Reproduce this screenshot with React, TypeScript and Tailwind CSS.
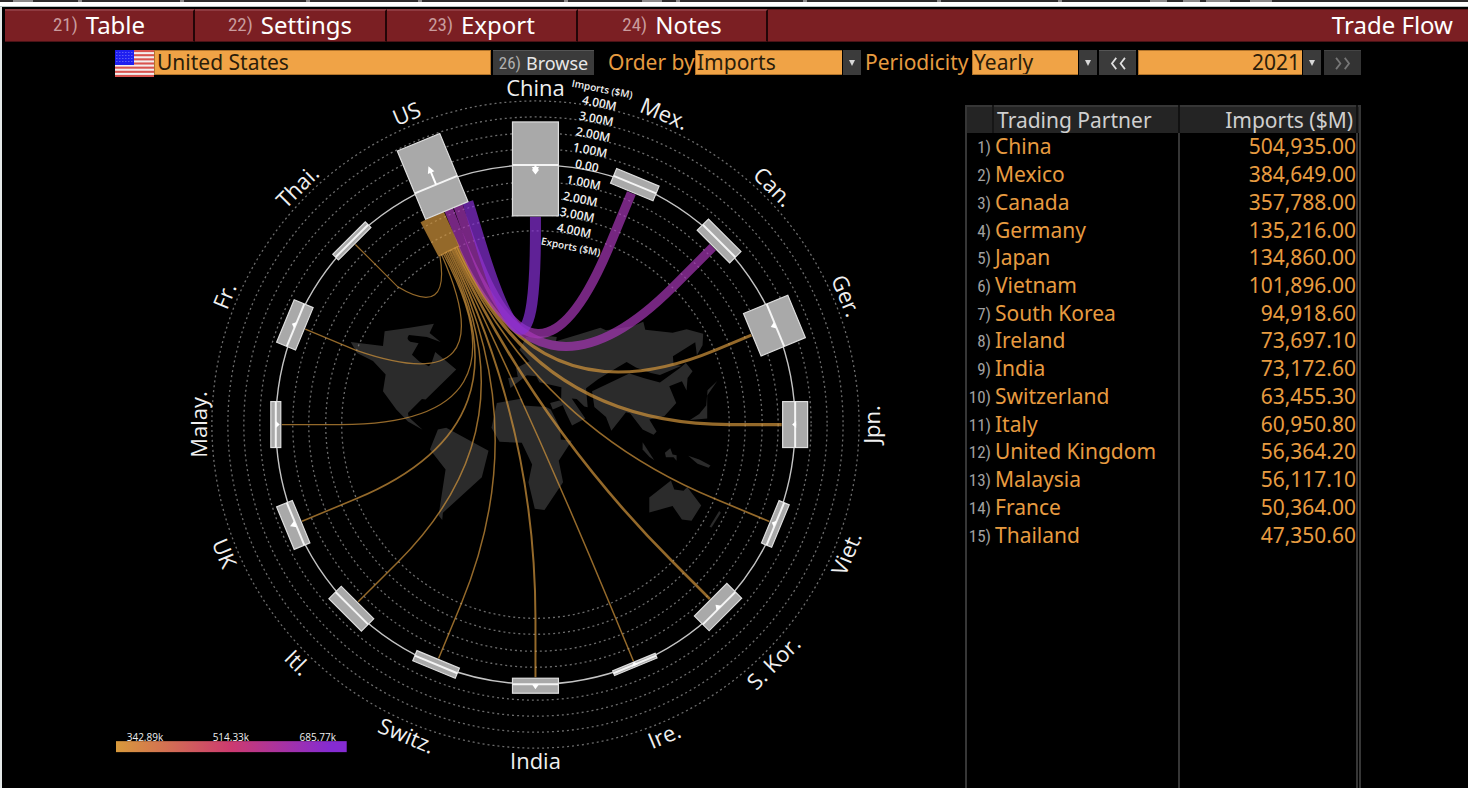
import type { ReactNode } from "react";

type Point = [number, number];

interface Node {
  label: string;
  angle: number;
  outer: number;
  inner: number;
  color?: string;
  width?: number;
  /** Signed length of the net balance arrow, positive pointing outwards. */
  net?: number;
  /** Control point of the flow curve, relative to the centre. */
  bend?: Point;
}

const AMBER = "#d3953c";
const MAGENTA = "#a736b6";
const PURPLE = "#882fd6";

const CX = 536;
const CY = 425;
const ZERO_RADIUS = 260;
const NODE_WIDTH = 46;
const LABEL_RADIUS = 337;
const BEND_RADIUS = 195;
const US_EDGE_RADIUS = 233;
const RINGS = [324, 308, 292, 276, 243, 227, 210, 194];

const nodes: Node[] = [
  { label: "China", angle: 0, outer: 43, inner: 51, color: PURPLE, width: 11, net: -9 },
  { label: "Mex.", angle: 22.5, outer: 8, inner: 8, color: MAGENTA, width: 9.5 },
  { label: "Can.", angle: 45, outer: 8, inner: 8, color: MAGENTA, width: 9 },
  { label: "Ger.", angle: 67.5, outer: 23, inner: 25, color: AMBER, width: 3, net: -5 },
  { label: "Jpn.", angle: 90, outer: 12.5, inner: 12.5, color: AMBER, width: 3.2, net: -3 },
  { label: "Viet.", angle: 112.5, outer: 5.5, inner: 5.5, color: AMBER, width: 1.7, net: -4 },
  { label: "S. Kor.", angle: 135, outer: 9, inner: 12, color: AMBER, width: 2.6, net: -5 },
  { label: "Ire.", angle: 157.5, outer: 2.5, inner: 2.5, color: AMBER, width: 1.5, net: -3 },
  { label: "India", angle: 180, outer: 9, inner: 6, color: AMBER, width: 2, net: 5 },
  { label: "Switz.", angle: 202.5, outer: 5.5, inner: 5.5, color: AMBER, width: 1.5 },
  { label: "Itl.", angle: 225, outer: 9.5, inner: 8, color: AMBER, width: 1.5 },
  { label: "UK", angle: 247.5, outer: 11, inner: 6, color: AMBER, width: 1.6, net: 6 },
  { label: "Malay.", angle: 270, outer: 5, inner: 5, color: AMBER, width: 1.3, net: -4 },
  { label: "Fr.", angle: 292.5, outer: 11, inner: 9.5, color: AMBER, width: 1.3, net: 4, bend: [-28, -22] },
  { label: "Thai.", angle: 315, outer: 4, inner: 4, color: AMBER, width: 1.2, bend: [-85, -106] },
  { label: "US", angle: 337.5, outer: 46, inner: 28, net: 20 },
];

/** Angle at which each flow meets the US block. */
const usAngles: Record<string, number> = { China: 343.1, "Mex.": 340.5, "Can.": 338 };
nodes
  .filter((n) => n.color === AMBER)
  .forEach((n, i) => {
    usAngles[n.label] = 336.4 - i * 0.53;
  });

const polar = (angle: number, r: number): Point => {
  const a = (angle * Math.PI) / 180;
  return [r * Math.sin(a), -r * Math.cos(a)];
};

const partners: [string, string][] = [
  ["China", "504,935.00"],
  ["Mexico", "384,649.00"],
  ["Canada", "357,788.00"],
  ["Germany", "135,216.00"],
  ["Japan", "134,860.00"],
  ["Vietnam", "101,896.00"],
  ["South Korea", "94,918.60"],
  ["Ireland", "73,697.10"],
  ["India", "73,172.60"],
  ["Switzerland", "63,455.30"],
  ["Italy", "60,950.80"],
  ["United Kingdom", "56,364.20"],
  ["Malaysia", "56,117.10"],
  ["France", "50,364.00"],
  ["Thailand", "47,350.60"],
];

const tabs = [
  { n: 21, label: "Table", width: "w-[190px]" },
  { n: 22, label: "Settings", width: "w-[192px]" },
  { n: 23, label: "Export", width: "w-[191px]" },
  { n: 24, label: "Notes", width: "w-[190px]" },
];

function Num({ children, className = "" }: { children: ReactNode; className?: string }) {
  return (
    <span className={`font-['Roboto_Condensed','Open_Sans',sans-serif] ${className}`}>{children}</span>
  );
}

function Flow({ node }: { node: Node }) {
  if (!node.color) return null;
  const end = usAngles[node.label];
  const [ax, ay] = polar(node.angle, ZERO_RADIUS - node.inner - 1);
  const [bx, by] = polar(node.angle, BEND_RADIUS);
  const [cx, cy] = node.bend ?? [0, 0];
  const [dx, dy] = polar(end, BEND_RADIUS);
  const [ex, ey] = polar(end, US_EDGE_RADIUS);
  const tail = node.color === AMBER ? "" : `L${ex} ${ey}`;
  return (
    <path
      d={`M${ax} ${ay}L${bx} ${by}Q${cx} ${cy} ${dx} ${dy}${tail}`}
      fill="none"
      stroke={node.color}
      strokeWidth={node.width}
      strokeOpacity={0.7}
    />
  );
}

/** Solid band in which the amber flows leave the US block side by side. */
function AmberBand() {
  const corners = [
    polar(336.7, US_EDGE_RADIUS),
    polar(330.4, US_EDGE_RADIUS),
    polar(330, BEND_RADIUS - 1),
    polar(336.9, BEND_RADIUS - 1),
  ];
  return <polygon points={corners.map((c) => c.join(",")).join(" ")} fill={AMBER} fillOpacity={0.7} />;
}

function Block({ node }: { node: Node }) {
  const net = node.net ?? 0;
  const dir = net > 0 ? -1 : 1;
  const tip = Math.abs(net) * dir;
  const head = Math.abs(net) > 8 ? 7 : Math.max(4, Math.abs(net));
  return (
    <g transform={`rotate(${node.angle}) translate(0 ${-ZERO_RADIUS})`}>
      <rect
        x={-NODE_WIDTH / 2}
        y={-node.outer}
        width={NODE_WIDTH}
        height={node.outer + node.inner}
        fill="#a9a9a9"
        stroke="#dedede"
        strokeWidth={1.2}
      />
      <line x1={-NODE_WIDTH / 2} x2={NODE_WIDTH / 2} y1={0} y2={0} stroke="#f4f4f4" strokeWidth={2} />
      {net !== 0 && (
        <g fill="#fff" stroke="none">
          <path d={`M0 ${tip}L-3.5 ${tip - head * dir}H3.5Z`} />
          <rect x={-1} y={Math.min(0, tip - 4 * dir)} width={2} height={Math.abs(tip - 4 * dir)} />
          {node.label === "China" && <path d="M-3.5 5L0 9.5L3.5 5L0 1Z" />}
        </g>
      )}
    </g>
  );
}

const SCALE_LABELS: [string, number][] = [
  ["4.00M", 328],
  ["3.00M", 312],
  ["2.00M", 296],
  ["1.00M", 280],
  ["0.00", 264],
  ["1.00M", 247],
  ["2.00M", 230],
  ["3.00M", 214],
  ["4.00M", 198],
];

function WorldMap() {
  return (
    <g transform="translate(340 300) scale(0.3333)" fill="#2b2b2b">
      <path d="M33 127L130 139L135 95L210 84L283 72L270 100L303 127L262 112L208 106Q198 118 212 126L237 131L217 165L240 186L268 200L276 190L287 157L350 210L258 300L247 298L205 340L207 352L249 391L205 366L170 330L130 275L138 225L100 184L52 160Z" />
      <path d="M295 390L320 385L447 454L427 533L310 640L308 662L297 648L318 510L271 450Z" />
      <path d="M472 310L548 297L550 318L620 322L634 330L662 385L664 420L697 424L658 484L671 548L615 632L586 628L567 548L578 495L547 430L480 427L456 385Z" />
      <path d="M506 235L535 232L530 206L570 185L540 150L560 112L620 108L652 112L650 125L720 104L783 84L800 92L880 80L912 66L918 90L1000 99L1042 89L1092 102L1090 137L1073 167L1068 128L1001 170L1003 196L1027 198L962 226L935 220L890 204L862 187L835 203L775 240L740 266L745 323L735 321L712 298L697 297L738 357L698 378L680 340L665 305L666 263L600 248L590 230L562 227L513 265Z" />
      <path d="M632 310L660 303L675 315L640 330Z" />
      <path d="M758 275L870 222L915 236L962 249L1022 205L1040 190L1060 215L1045 235L1042 273L1028 245L990 260L1011 310L975 350L930 360L952 396L943 406L910 390L873 342L860 338L816 394L800 352L765 322Z" />
      <path d="M1134 244L1104 288L1104 357L1052 361L1080 343L1101 318L1105 272Z" />
      <path d="M910 428L945 482L930 472L910 450Z" />
      <path d="M977 460L993 446L1000 465L1012 467L1012 484L1003 473L980 473Z" />
      <path d="M1047 469L1080 480L1114 498L1108 505L1075 493Z" />
      <path d="M930 594L995 543L1005 570L1033 574L1044 563L1086 618L1057 664L1028 660L1000 620L930 639Z" />
      <path d="M1140 635L1145 640L1117 684L1111 682Z" />
    </g>
  );
}

function FlowChart() {
  return (
    <svg
      viewBox="115 77 785 711"
      className="block w-full overflow-visible font-['Open_Sans',sans-serif]"
      role="img"
      aria-label="United States imports by trading partner, 2021"
    >
      <defs>
        <linearGradient id="flowScale">
          <stop offset="0" stopColor="#d89a3c" />
          <stop offset="0.5" stopColor="#cc3a70" />
          <stop offset="0.93" stopColor="#852bd2" />
        </linearGradient>
      </defs>
      <WorldMap />
      <g transform={`translate(${CX} ${CY})`}>
        {RINGS.map((r) => (
          <circle key={r} r={r} fill="none" stroke="#6c6c6c" strokeWidth={1.3} strokeDasharray="2 3" />
        ))}
        <circle r={ZERO_RADIUS} fill="none" stroke="#c4c4c4" strokeWidth={1.4} />
        {[...nodes].reverse().map((n) => (
          <Flow key={n.label} node={n} />
        ))}
        <AmberBand />
        {nodes.map((n) => (
          <Block key={n.label} node={n} />
        ))}
        {nodes.map((n) => {
          const [x, y] = polar(n.angle, LABEL_RADIUS);
          const flip = n.angle >= 90 && n.angle < 270;
          return (
            <text
              key={n.label}
              transform={`translate(${x} ${y}) rotate(${flip ? n.angle - 180 : n.angle})`}
              y={8}
              textAnchor="middle"
              fontSize={22}
              fontWeight={500}
              fill="#f0f0f0"
            >
              {n.label}
            </text>
          );
        })}
        <g transform="rotate(11.25)" fill="#f0f0f0" textAnchor="middle" fontWeight={600}>
          {SCALE_LABELS.map(([text, r]) => (
            <text key={r} y={-r + 4} fontSize={12}>
              {text}
            </text>
          ))}
          <text y={-339} fontSize={10}>
            Imports ($M)
          </text>
          <text y={-178} fontSize={10}>
            Exports ($M)
          </text>
        </g>
      </g>
      <rect x={116} y={742} width={231} height={11} fill="url(#flowScale)" />
      <g fontSize={10} fill="#f0f0f0" textAnchor="middle">
        <text x={145} y={742}>342.89k</text>
        <text x={231} y={742}>514.33k</text>
        <text x={318} y={742}>685.77k</text>
      </g>
    </svg>
  );
}

function Flag() {
  return (
    <svg viewBox="0 0 39 27" className="h-[27px] w-[39px] shrink-0" role="img" aria-label="United States flag">
      <rect width={39} height={27} fill="#f3eeee" />
      {[0, 1, 2, 3, 4, 5, 6].map((i) => (
        <rect key={i} y={i * 4.15} width={39} height={2.1} fill="#d9534f" />
      ))}
      <rect width={19} height={15} fill="#1f1ff0" />
      {[2, 5, 8, 11].map((y) => (
        <line key={y} x1={1} x2={18} y1={y + 0.5} y2={y + 0.5} stroke="#6f6ff5" strokeWidth={0.8} strokeDasharray="1.5 1.5" />
      ))}
    </svg>
  );
}

function Dropdown({ id, value, options, className, alignEnd = false }: {
  id: string;
  value: string;
  options: string[];
  className: string;
  alignEnd?: boolean;
}) {
  return (
    <div className={`relative h-[25px] ${className}`}>
      <select
        id={id}
        aria-label={alignEnd ? "Year" : undefined}
        defaultValue={value}
        className={`h-full w-full appearance-none border border-[#b0732b] bg-[#f0a346] pl-px pr-[20px] leading-[23px] text-[#2a1c0a] ${
          alignEnd ? "text-right" : "text-left"
        }`}
      >
        {options.map((o) => (
          <option key={o}>{o}</option>
        ))}
      </select>
      <span className="pointer-events-none absolute inset-y-0 right-0 flex w-[19px] items-center justify-center border-l border-black bg-[#3b3b3b]">
        <svg viewBox="0 0 8 8" className="size-2" aria-hidden="true">
          <path d="M1 1H7L4 7Z" fill="#d8d8d8" />
        </svg>
      </span>
    </div>
  );
}

function Chevrons({ flip = false, color }: { flip?: boolean; color: string }) {
  return (
    <svg viewBox="0 0 20 15" className="h-[13px] w-[20px]" aria-hidden="true" fill="none" stroke={color} strokeWidth={2}>
      <path d={flip ? "M2 1L7 7.5L2 14M12 1L17 7.5L12 14" : "M8 1L3 7.5L8 14M18 1L13 7.5L18 14"} />
    </svg>
  );
}

export default function App() {
  return (
    <div className="flex min-h-screen flex-col overflow-hidden bg-black font-['Noto_Sans','Open_Sans',sans-serif] text-[21px] leading-[25px] text-white">
      <svg viewBox="0 0 1468 2" preserveAspectRatio="none" className="block h-[2px] w-full" aria-hidden="true">
        <rect width={1468} height={2} fill="#2d2b2c" />
        {[78, 180, 306, 418, 564, 676, 803, 937, 1058].map((x) => (
          <rect key={x} x={x} width={4} height={2} fill="#8b898a" />
        ))}
        {[[13, 20], [642, 20], [1150, 17], [1183, 17], [1206, 24], [1250, 22]].map(([x, w]) => (
          <rect key={x} x={x} width={w} height={2} fill="#8b898a" />
        ))}
      </svg>
      <div className="h-[5px] border-b border-[#b9c4c4] bg-white" />

      <div className="flex flex-1 flex-col border-l-2 border-[#e4e8e8]">
        <header className="flex h-[35px] border-t-2 border-black pl-[3px] text-2xl leading-[25px]">
          <nav className="flex h-[33px] shrink-0">
            {tabs.map((t) => (
              <button
                key={t.n}
                className={`flex items-center justify-center gap-2 border-b border-r-2 border-t-2 border-b-[#4a1216] border-r-[#230507] border-t-[#8f3a40] bg-[#7b1f23] pb-[3px] ${t.width}`}
              >
                <Num className="text-[19px] text-[#c99b9d]">{t.n})</Num>
                <span>{t.label}</span>
              </button>
            ))}
          </nav>
          <h1 className="flex h-[33px] flex-1 items-center justify-end border-b border-t border-b-[#4a1216] border-t-[#5d1519] bg-[#7b1f23] pb-[3px] pr-[15px]">
            Trade Flow
          </h1>
        </header>

        <form className="flex items-start pl-[113px] pt-2 text-[#e79b40]" onSubmit={(e) => e.preventDefault()}>
          <Flag />
          <input
            aria-label="Country"
            defaultValue="United States"
            className="h-[25px] w-[337px] border border-[#b0732b] bg-[#f0a346] px-[2px] text-[#2a1c0a]"
          />
          <button
            type="button"
            className="ml-[2px] flex h-[25px] w-[101px] items-center justify-center gap-[5px] border-t border-[#555] bg-[#3b3b3b] text-lg leading-6 text-[#e8e8e8]"
          >
            <Num className="text-[17px] text-[#b0b0b0]">26)</Num>
            Browse
          </button>
          <label htmlFor="order" className="ml-[14px] w-[87px] whitespace-nowrap">
            Order by
          </label>
          <Dropdown id="order" value="Imports" options={["Imports", "Exports"]} className="w-[166px]" />
          <label htmlFor="periodicity" className="ml-[4px] w-[107px] whitespace-nowrap">
            Periodicity
          </label>
          <Dropdown id="periodicity" value="Yearly" options={["Yearly", "Quarterly", "Monthly"]} className="w-[125px]" />
          <button
            type="button"
            aria-label="Previous period"
            className="ml-[2px] flex h-[25px] w-[37px] items-center justify-center border-t border-[#555] bg-[#3b3b3b]"
          >
            <Chevrons color="#e0e0e0" />
          </button>
          <Dropdown id="year" value="2021" options={["2021", "2020", "2019"]} className="ml-[2px] w-[183px]" alignEnd />
          <button
            type="button"
            aria-label="Next period"
            disabled
            className="ml-[3px] flex h-[25px] w-[37px] items-center justify-center border-t border-[#444] bg-[#333]"
          >
            <Chevrons flip color="#777" />
          </button>
        </form>

        <main className="flex flex-1 gap-[66px] pl-[113px] pr-[107px]">
          <div className="min-w-0 flex-1">
            <FlowChart />
          </div>
          <section className="mt-[28px] flex w-[396px] shrink-0 flex-col border-l-2 border-r-2 border-[#363636]">
            <table className="h-[444px] w-full table-fixed border-collapse">
              <colgroup>
                <col className="w-[26px]" />
                <col className="w-[186px]" />
                <col />
                <col className="w-[2px]" />
              </colgroup>
              <thead>
                <tr className="h-[27px] bg-[#242424] text-[#cfcfcf]">
                  <th className="border-r-2 border-t-2 border-r-[#161616] border-t-[#363636] p-0" aria-label="Rank" />
                  <th className="border-r-2 border-t-2 border-r-[#111] border-t-[#363636] p-0 pl-[3px] text-left font-normal">
                    Trading Partner
                  </th>
                  <th className="border-r-2 border-t-2 border-r-[#111] border-t-[#363636] p-0 pr-[3px] text-right font-normal">
                    Imports ($M)
                  </th>
                  <td className="border-t-2 border-[#363636] p-0" />
                </tr>
              </thead>
              <tbody className="text-[#e79b40]">
                {partners.map(([name, value], i) => (
                  <tr key={name}>
                    <td className="p-0 text-right text-[#a0a0a0]">
                      <Num className="mr-[2px] text-[17px]">{i + 1})</Num>
                    </td>
                    <td className="whitespace-nowrap border-r-2 border-[#363636] p-0 pl-[2px]">{name}</td>
                    <td className="border-r-2 border-[#363636] p-0 text-right">{value}</td>
                    <td className="p-0" />
                  </tr>
                ))}
              </tbody>
            </table>
            <div className="flex flex-1" aria-hidden="true">
              <div className="w-[213px] border-r-2 border-[#363636]" />
              <div className="mr-px flex-1 border-r-2 border-[#363636]" />
            </div>
          </section>
        </main>
      </div>
    </div>
  );
}
